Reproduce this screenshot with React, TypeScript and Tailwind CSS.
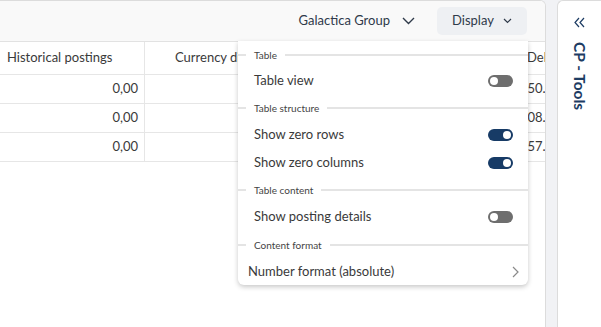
import React from "react";

function Toggle({ on }: { on: boolean }) {
  return (
    <div
      className={`relative w-[25px] h-[12px] rounded-full ${on ? "bg-[#173b66]" : "bg-[#6e6e6e]"}`}
    >
      <div
        className={`absolute top-[2px] w-[8px] h-[8px] rounded-full bg-white ${on ? "left-[15px]" : "left-[2px]"}`}
      />
    </div>
  );
}

function Section({ label, h }: { label: string; h: string }) {
  return (
    <div className={`flex items-center ${h}`}>
      <div className="w-[8px] h-[2px] bg-[#e4e4e4]" />
      <div className="px-[8px] text-[10px] leading-[12px] text-[#444]">{label}</div>
      <div className="flex-1 h-[2px] bg-[#e4e4e4]" />
    </div>
  );
}

function ToggleRow({ label, on }: { label: string; on: boolean }) {
  return (
    <div className="flex items-center justify-between h-[28px] pl-[16px] pr-[15px]">
      <span className="text-[13px] text-[#3a3a3a]">{label}</span>
      <Toggle on={on} />
    </div>
  );
}

export default function App() {
  const rows = ["150.8", "108.1", "157.3"];
  return (
    <div
      className="w-[601px] h-[327px] flex bg-[#f1f2f5] overflow-hidden"
      style={{ fontFamily: "Lato, 'Open Sans', sans-serif" }}
    >
      {/* Main panel */}
      <div className="relative w-[546px] h-full bg-white border-t border-r border-[#dcdcdc] rounded-tr-[6px] flex flex-col overflow-hidden">
        <div className="h-[41px] shrink-0 bg-[#f9f9f9] border-b border-[#e2e2e2] flex items-center justify-end pr-[18px]">
          <div className="flex items-center mr-[22px] text-[13px] text-[#2f3a4a]">
            <span>Galactica Group</span>
            <svg className="ml-[12px]" width="13" height="8" viewBox="0 0 13 8" fill="none">
              <path d="M1 1l5.5 5.5L12 1" stroke="#2f3a4a" strokeWidth="1.4" />
            </svg>
          </div>
          <div className="w-[90px] h-[28px] rounded-[5px] bg-[#eef0f3] flex items-center justify-center text-[13px] text-[#2f3a4a]">
            <span>Display</span>
            <svg className="ml-[9px]" width="9" height="6" viewBox="0 0 9 6" fill="none">
              <path d="M1 1l3.5 3.5L8 1" stroke="#2f3a4a" strokeWidth="1.2" />
            </svg>
          </div>
        </div>
        {/* table */}
        <div className="text-[13px] text-[#3a3a3a]">
          <div className="flex h-[33px] border-b border-[#e6e6e6]">
            <div className="w-[145px] shrink-0 border-r border-[#e6e6e6] flex items-center pl-[7px]">
              Historical postings
            </div>
            <div className="w-[376px] shrink-0 flex items-center pl-[30px] whitespace-nowrap overflow-hidden">
              Currency difference
            </div>
            <div className="flex-1 flex items-center pl-[6px] overflow-hidden whitespace-nowrap">
              Debit
            </div>
          </div>
          {rows.map((r) => (
            <div key={r} className="flex h-[29px] border-b border-[#e6e6e6]">
              <div className="w-[145px] shrink-0 border-r border-[#e6e6e6] flex items-center justify-end pr-[6px]">
                0,00
              </div>
              <div className="w-[376px] shrink-0" />
              <div className="flex-1 flex items-center overflow-hidden whitespace-nowrap">
                <span className="ml-[-1px]">{r}</span>
              </div>
            </div>
          ))}
        </div>

        {/* dropdown */}
        <div className="absolute left-[238px] top-[40px] w-[290px] h-[244px] bg-white rounded-b-[6px] shadow-[0_2px_5px_rgba(0,0,0,0.22)] flex flex-col pt-[2px]">
          <Section label="Table" h="h-[24px]" />
          <ToggleRow label="Table view" on={false} />
          <Section label="Table structure" h="h-[26px]" />
          <ToggleRow label="Show zero rows" on={true} />
          <ToggleRow label="Show zero columns" on={true} />
          <Section label="Table content" h="h-[26px]" />
          <ToggleRow label="Show posting details" on={false} />
          <Section label="Content format" h="h-[28px]" />
          <div className="flex items-center justify-between h-[26px] pl-[10px] pr-[9px]">
            <span className="text-[13px] text-[#3a3a3a]">Number format (absolute)</span>
            <svg width="7" height="12" viewBox="0 0 7 12" fill="none">
              <path d="M1 1l5 5-5 5" stroke="#8a8a8a" strokeWidth="1.2" />
            </svg>
          </div>
        </div>
      </div>

      {/* Sidebar */}
      <div className="ml-[11px] flex-1 h-full bg-white border-t border-l border-[#dcdcdc] rounded-tl-[6px] flex flex-col items-center pt-[16px]">
        <svg width="11" height="11" viewBox="0 0 11 11" fill="none">
          <path d="M5 1L1 5.5 5 10M10 1L6 5.5 10 10" stroke="#1d3c63" strokeWidth="1.2" />
        </svg>
        <div
          className="mt-[14px] text-[15.5px] leading-[16px] font-bold text-[#1d3c63] whitespace-nowrap"
          style={{ writingMode: "vertical-rl" }}
        >
          CP - Tools
        </div>
      </div>
    </div>
  );
}
